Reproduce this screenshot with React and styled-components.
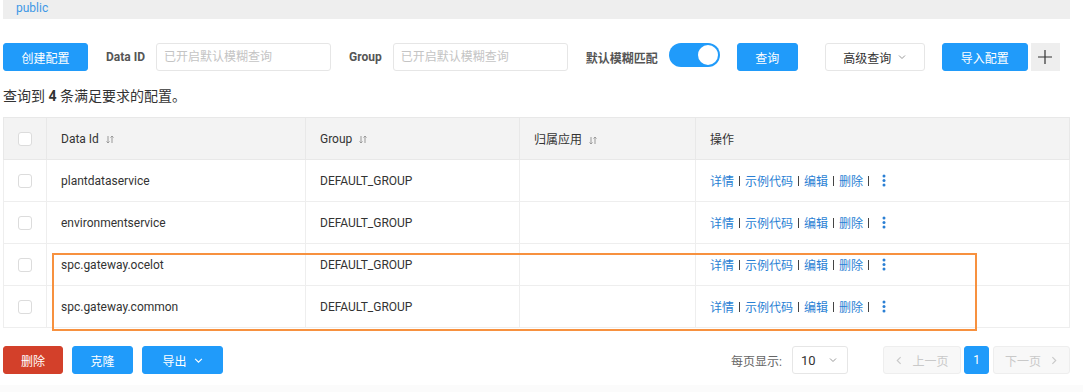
import React from 'react';
import styled, {createGlobalStyle} from 'styled-components';

const GlobalStyle = createGlobalStyle`
  body {
    margin: 0;
    background: #fff;
    font-family: Roboto, "Noto Sans CJK SC", sans-serif;
    font-size: 12px;
    color: #333;
  }
  * { box-sizing: border-box; }
`;

const Page = styled.div`
  width: 1083px;
  padding: 0 13px 0 3px;
`;

const TopBar = styled.div`
  height: 19px;
  background: #eeeeee;
  padding-left: 13px;
  line-height: 17px;
  font-size: 12px;
  color: #3d98e6;
`;

const Toolbar = styled.div`
  display: flex;
  align-items: center;
  height: 28px;
  margin-top: 24px;
`;

const Button = styled.button`
  height: 28px;
  width: ${p => p.w}px;
  margin-left: ${p => p.ml || 0}px;
  padding: 0;
  border-radius: 3px;
  border: 1px solid ${p => p.kind === 'red' ? '#d3402a' : p.kind === 'plain' ? '#e6e6e6' : '#209bfa'};
  background: ${p => p.kind === 'red' ? '#d3402a' : p.kind === 'plain' ? '#fff' : '#209bfa'};
  color: ${p => p.kind === 'plain' ? '#333' : '#fff'};
  font-family: Roboto, "Noto Sans CJK SC", sans-serif;
  font-size: 12px;
  display: flex;
  align-items: center;
  justify-content: center;
  gap: 7px;
  cursor: pointer;
`;

const PlusButton = styled.button`
  width: 29px;
  height: 28px;
  margin-left: 3px;
  border: none;
  background: #eeeeee;
  padding: 0;
  display: flex;
  align-items: center;
  justify-content: center;
`;

const Label = styled.span`
  margin: 0 11px 0 18px;
  font-weight: bold;
  color: #555;
  font-size: 12px;
  white-space: nowrap;
`;

const Input = styled.input`
  width: 175px;
  height: 28px;
  border: 1px solid #e6e6e6;
  border-radius: 3px;
  padding: 0 7px;
  font-family: Roboto, "Noto Sans CJK SC", sans-serif;
  font-size: 12px;
  outline: none;
  &::placeholder { color: #c4c4c4; }
`;

const Switch = styled.div`
  align-self: flex-start;
  width: 51px;
  height: 24px;
  border-radius: 12px;
  background: #209bfa;
  position: relative;
  &::after {
    content: '';
    position: absolute;
    right: 2px;
    top: 2px;
    width: 20px;
    height: 20px;
    border-radius: 50%;
    background: #fff;
  }
`;

const Summary = styled.div`
  margin-top: 15px;
  font-size: 14px;
  line-height: 20px;
  color: #333;
  b { font-weight: bold; }
`;

const TableWrap = styled.div`
  position: relative;
  margin-top: 11px;
`;

const Table = styled.table`
  width: 1067px;
  border-collapse: collapse;
  table-layout: fixed;
  border: 1px solid #ebebeb;
`;

const Th = styled.th`
  height: 42px;
  background: #f3f3f3;
  border: 1px solid #e8e8e8;
  font-weight: normal;
  padding: 0 ${p => p.check ? 0 : 14}px;
  text-align: ${p => p.check ? 'center' : 'left'};
  color: #333;
  font-size: 12px;
`;

const Td = styled.td`
  height: 42px;
  border: 1px solid #eeeeee;
  padding: 0 ${p => p.check ? 0 : 14}px;
  text-align: ${p => p.check ? 'center' : 'left'};
  color: #333;
  font-size: 12px;
`;

const Check = styled.span`
  display: inline-block;
  width: 14px;
  height: 14px;
  border: 1px solid #dcdcdc;
  border-radius: 3px;
  background: #fff;
  vertical-align: middle;
`;

const SortWrap = styled.span`
  display: inline-flex;
  margin-left: 7px;
  vertical-align: middle;
`;

const Actions = styled.div`
  display: flex;
  align-items: center;
  color: #2a7fd4;
  font-size: 12px;
`;

const Sep = styled.span`
  display: inline-block;
  width: 1px;
  height: 10px;
  background: #444;
  margin: 0 5px;
`;

const Highlight = styled.div`
  position: absolute;
  left: 49px;
  top: 136px;
  width: 925px;
  height: 78px;
  border: 2px solid #f7913f;
  pointer-events: none;
`;

const Bottom = styled.div`
  display: flex;
  align-items: center;
  justify-content: space-between;
  margin-top: 18px;
  height: 28px;
`;

const Group = styled.div`
  display: flex;
  align-items: center;
`;

const PageLabel = styled.span`
  color: #666;
  font-size: 12px;
`;

const Select = styled.div`
  width: 56px;
  height: 28px;
  margin-left: 10px;
  border: 1px solid #e6e6e6;
  border-radius: 3px;
  display: flex;
  align-items: center;
  justify-content: space-between;
  padding: 0 10px 0 8px;
  font-size: 13px;
  color: #333;
`;

const PageBtn = styled.div`
  height: 28px;
  width: ${p => p.w}px;
  margin-left: ${p => p.ml || 0}px;
  border-radius: 3px;
  border: 1px solid ${p => p.active ? '#209bfa' : '#eeeeee'};
  background: ${p => p.active ? '#209bfa' : '#f8f8f8'};
  color: ${p => p.active ? '#fff' : '#c9c9c9'};
  display: flex;
  align-items: center;
  justify-content: center;
  gap: 8px;
  font-size: 12px;
`;

const Footer = styled.div`
  height: 8px;
  margin: 11px -13px 0 -3px;
  background: #fbfbfb;
`;

const Chevron = ({color = '#999', size = 8, dir = 'down'}) => {
  const d = {
    down: 'M1 2.5 L4 5.5 L7 2.5',
    left: 'M5 1 L2 4 L5 7',
    right: 'M3 1 L6 4 L3 7',
  }[dir];
  return (
    <svg width={size} height={size} viewBox="0 0 8 8">
      <path d={d} fill="none" stroke={color} strokeWidth="1" />
    </svg>
  );
};

const SortIcon = () => (
  <SortWrap>
    <svg width="8" height="9" viewBox="0 0 8 9">
      <path d="M2 1 V8 M0.5 6.5 L2 8 L3.5 6.5 M6 8 V1 M4.5 2.5 L6 1 L7.5 2.5" fill="none" stroke="#999" strokeWidth="1" />
    </svg>
  </SortWrap>
);

const More = () => (
  <svg width="4" height="13" viewBox="0 0 4 13" style={{marginLeft: 8}}>
    <circle cx="2" cy="2" r="1.5" fill="#2a7fd4" />
    <circle cx="2" cy="6.5" r="1.5" fill="#2a7fd4" />
    <circle cx="2" cy="11" r="1.5" fill="#2a7fd4" />
  </svg>
);

const rows = [
  'plantdataservice',
  'environmentservice',
  'spc.gateway.ocelot',
  'spc.gateway.common',
];

export default function App() {
  return (
    <Page>
      <GlobalStyle />
      <TopBar>public</TopBar>

      <Toolbar>
        <Button w={85}>创建配置</Button>
        <Label>Data ID</Label>
        <Input placeholder="已开启默认模糊查询" />
        <Label>Group</Label>
        <Input placeholder="已开启默认模糊查询" />
        <Label>默认模糊匹配</Label>
        <Switch />
        <Button w={61} ml={17}>查询</Button>
        <Button w={100} ml={27} kind="plain">
          高级查询 <Chevron color="#999" size={8} />
        </Button>
        <Button w={86} ml={17}>导入配置</Button>
        <PlusButton>
          <svg width="16" height="16" viewBox="0 0 16 16">
            <path d="M8 1 V15 M1 8 H15" stroke="#333" strokeWidth="1.2" />
          </svg>
        </PlusButton>
      </Toolbar>

      <Summary>查询到 <b>4</b> 条满足要求的配置。</Summary>

      <TableWrap>
        <Table>
          <colgroup>
            <col style={{width: 43}} />
            <col style={{width: 259}} />
            <col style={{width: 214}} />
            <col style={{width: 176}} />
            <col />
          </colgroup>
          <thead>
            <tr>
              <Th check><Check /></Th>
              <Th>Data Id<SortIcon /></Th>
              <Th>Group<SortIcon /></Th>
              <Th>归属应用<SortIcon /></Th>
              <Th>操作</Th>
            </tr>
          </thead>
          <tbody>
            {rows.map(id => (
              <tr key={id}>
                <Td check><Check /></Td>
                <Td>{id}</Td>
                <Td>DEFAULT_GROUP</Td>
                <Td />
                <Td>
                  <Actions>
                    详情<Sep />示例代码<Sep />编辑<Sep />删除<Sep /><More />
                  </Actions>
                </Td>
              </tr>
            ))}
          </tbody>
        </Table>
        <Highlight />
      </TableWrap>

      <Bottom>
        <Group>
          <Button w={60} kind="red">删除</Button>
          <Button w={61} ml={9}>克隆</Button>
          <Button w={81} ml={9}>导出 <Chevron color="#fff" size={9} /></Button>
        </Group>
        <Group>
          <PageLabel>每页显示:</PageLabel>
          <Select>10 <Chevron color="#999" size={8} /></Select>
          <PageBtn w={78} ml={35}><Chevron dir="left" color="#c9c9c9" size={9} />上一页</PageBtn>
          <PageBtn w={25} ml={3} active>1</PageBtn>
          <PageBtn w={77} ml={4}>下一页<Chevron dir="right" color="#c9c9c9" size={9} /></PageBtn>
        </Group>
      </Bottom>
      <Footer />
    </Page>
  );
}
